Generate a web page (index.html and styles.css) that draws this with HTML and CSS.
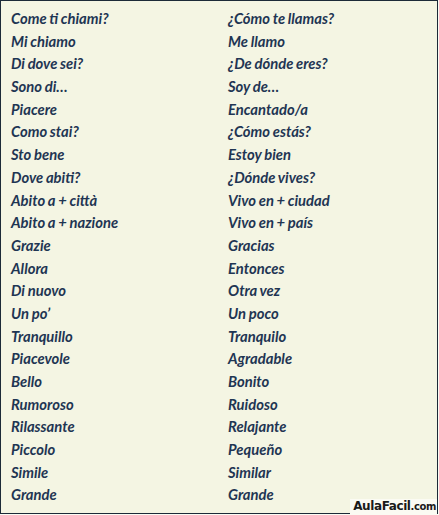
FILE: index.html
```html
<!DOCTYPE html>
<html>
<head>
<meta charset="utf-8">
<link rel="stylesheet" href="styles.css">
</head>
<body>
<div class="sheet">
  <div class="grid">
    <div class="it">Come ti chiami?</div><div class="es">¿Cómo te llamas?</div>
    <div class="it">Mi chiamo</div><div class="es">Me llamo</div>
    <div class="it">Di dove sei?</div><div class="es">¿De dónde eres?</div>
    <div class="it">Sono di…</div><div class="es">Soy de…</div>
    <div class="it">Piacere</div><div class="es">Encantado/a</div>
    <div class="it">Como stai?</div><div class="es">¿Cómo estás?</div>
    <div class="it">Sto bene</div><div class="es">Estoy bien</div>
    <div class="it">Dove abiti?</div><div class="es">¿Dónde vives?</div>
    <div class="it">Abito a + città</div><div class="es">Vivo en + ciudad</div>
    <div class="it">Abito a + nazione</div><div class="es">Vivo en + país</div>
    <div class="it">Grazie</div><div class="es">Gracias</div>
    <div class="it">Allora</div><div class="es">Entonces</div>
    <div class="it">Di nuovo</div><div class="es">Otra vez</div>
    <div class="it">Un po’</div><div class="es">Un poco</div>
    <div class="it">Tranquillo</div><div class="es">Tranquilo</div>
    <div class="it">Piacevole</div><div class="es">Agradable</div>
    <div class="it">Bello</div><div class="es">Bonito</div>
    <div class="it">Rumoroso</div><div class="es">Ruidoso</div>
    <div class="it">Rilassante</div><div class="es">Relajante</div>
    <div class="it">Piccolo</div><div class="es">Pequeño</div>
    <div class="it">Simile</div><div class="es">Similar</div>
    <div class="it">Grande</div><div class="es">Grande</div>
  </div>
  <div class="mark">AulaFacil<span class="dom">.com</span></div>
</div>
</body>
</html>
```

FILE: styles.css
```css
html, body {
  margin: 0;
  padding: 0;
  background: #fbfbf3;
}
.sheet {
  position: relative;
  box-sizing: border-box;
  width: 438px;
  height: 514px;
  border: 1px solid #1c2a38;
  background: #f4f5e3;
}
.grid {
  display: grid;
  grid-template-columns: 217px 1fr;
  grid-auto-rows: 22.7px;
  padding: 6px 0 0 10px;
  font-family: "Lato", "Open Sans", sans-serif;
  font-weight: 700;
  font-style: italic;
  font-size: 14.8px;
  line-height: 22.7px;
  color: #1f3553;
  word-spacing: -0.6px;
}
.mark {
  position: absolute;
  right: 0;
  bottom: -1px;
  padding: 0 1px 0 3px;
  background: #fbfbf3;
  font-family: "DejaVu Sans", Verdana, sans-serif;
  font-weight: 700;
  font-size: 12px;
  line-height: 15px;
  color: #1a1a1a;
  letter-spacing: -0.4px;
}
.dom {
  font-size: 10px;
}
```
